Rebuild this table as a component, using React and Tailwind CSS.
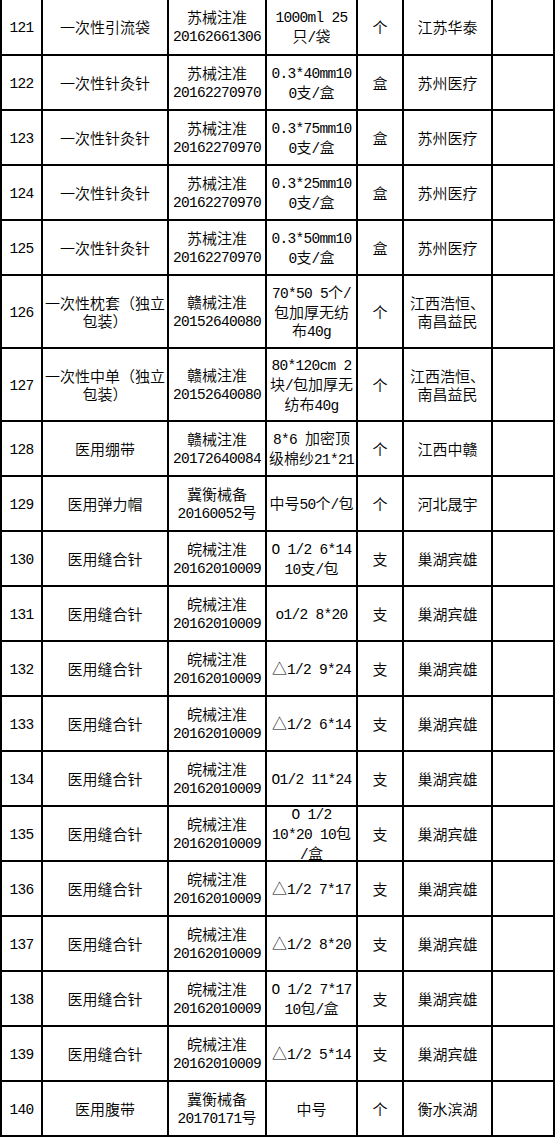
import React from 'react'

const widths = ['w-[43px] border-l-2', 'w-[126px]', 'w-[98px]', 'w-[91px]', 'w-[46px]', 'w-[89px]', 'w-[62px]']

const needle = ['苏械注准', '20162270970']
const suture = ['皖械注准', '20162010009']

// 序号, 名称, 注册证, 规格, 单位, 厂家, 高度
const rows = [
    ['121', ['一次性引流袋'], ['苏械注准', '20162661306'], ['1000ml 25', '只/袋'], '个', ['江苏华泰'], 'h-[56px]'],
    ['122', ['一次性针灸针'], needle, ['0.3*40mm10', '0支/盒'], '盒', ['苏州医疗']],
    ['123', ['一次性针灸针'], needle, ['0.3*75mm10', '0支/盒'], '盒', ['苏州医疗']],
    ['124', ['一次性针灸针'], needle, ['0.3*25mm10', '0支/盒'], '盒', ['苏州医疗']],
    ['125', ['一次性针灸针'], needle, ['0.3*50mm10', '0支/盒'], '盒', ['苏州医疗']],
    ['126', ['一次性枕套（独立', '包装）'], ['赣械注准', '20152640080'], ['70*50 5个/', '包加厚无纺', '布40g'], '个', ['江西浩恒、', '南昌益民'], 'h-[73px]'],
    ['127', ['一次性中单（独立', '包装）'], ['赣械注准', '20152640080'], ['80*120cm 2', '块/包加厚无', '纺布40g'], '个', ['江西浩恒、', '南昌益民'], 'h-[73px]'],
    ['128', ['医用绷带'], ['赣械注准', '20172640084'], ['8*6 加密顶', '级棉纱21*21'], '个', ['江西中赣']],
    ['129', ['医用弹力帽'], ['冀衡械备', '20160052号'], ['中号50个/包'], '个', ['河北晟宇']],
    ['130', ['医用缝合针'], suture, ['O 1/2 6*14', '10支/包'], '支', ['巢湖宾雄']],
    ['131', ['医用缝合针'], suture, ['o1/2 8*20'], '支', ['巢湖宾雄']],
    ['132', ['医用缝合针'], suture, ['△1/2 9*24'], '支', ['巢湖宾雄']],
    ['133', ['医用缝合针'], suture, ['△1/2 6*14'], '支', ['巢湖宾雄']],
    ['134', ['医用缝合针'], suture, ['O1/2 11*24'], '支', ['巢湖宾雄']],
    ['135', ['医用缝合针'], suture, ['O 1/2', '10*20 10包', '/盒'], '支', ['巢湖宾雄']],
    ['136', ['医用缝合针'], suture, ['△1/2 7*17'], '支', ['巢湖宾雄']],
    ['137', ['医用缝合针'], suture, ['△1/2 8*20'], '支', ['巢湖宾雄']],
    ['138', ['医用缝合针'], suture, ['O 1/2 7*17', '10包/盒'], '支', ['巢湖宾雄']],
    ['139', ['医用缝合针'], suture, ['△1/2 5*14'], '支', ['巢湖宾雄']],
    ['140', ['医用腹带'], ['冀衡械备', '20170171号'], ['中号'], '个', ['衡水滨湖']],
]

function Line({ text }) {
    const parts = text.split(/([\x20-\x7E]+)/).filter(Boolean)
    return (
        <div className="whitespace-pre">
            {parts.map((p, i) =>
                /^[\x20-\x7E]+$/.test(p)
                    ? <span key={i} className="font-['Liberation_Mono',monospace] text-[14.5px] tracking-[-0.7px]">{p}</span>
                    : <span key={i}>{p}</span>
            )}
        </div>
    )
}

function Cell({ w, lines }) {
    return (
        <div className={`${w} shrink-0 h-full border-r-2 border-b-2 border-black flex flex-col items-center justify-center text-center`}>
            {lines.map((l, i) => <Line key={i} text={l} />)}
        </div>
    )
}

export default function App() {
    return (
        <div className="w-[555px] bg-white text-black font-['Noto_Sans_CJK_SC',sans-serif] font-[350] text-[15px] leading-[18px]">
            {rows.map(([no, name, reg, spec, unit, maker, h]) => (
                <div key={no} className={`flex ${h || 'h-[55px]'}`}>
                    <Cell w={widths[0]} lines={[no]} />
                    <Cell w={widths[1]} lines={name} />
                    <Cell w={widths[2]} lines={reg} />
                    <Cell w={widths[3]} lines={spec} />
                    <Cell w={widths[4]} lines={[unit]} />
                    <Cell w={widths[5]} lines={maker} />
                    <Cell w={widths[6]} lines={[]} />
                </div>
            ))}
        </div>
    )
}
